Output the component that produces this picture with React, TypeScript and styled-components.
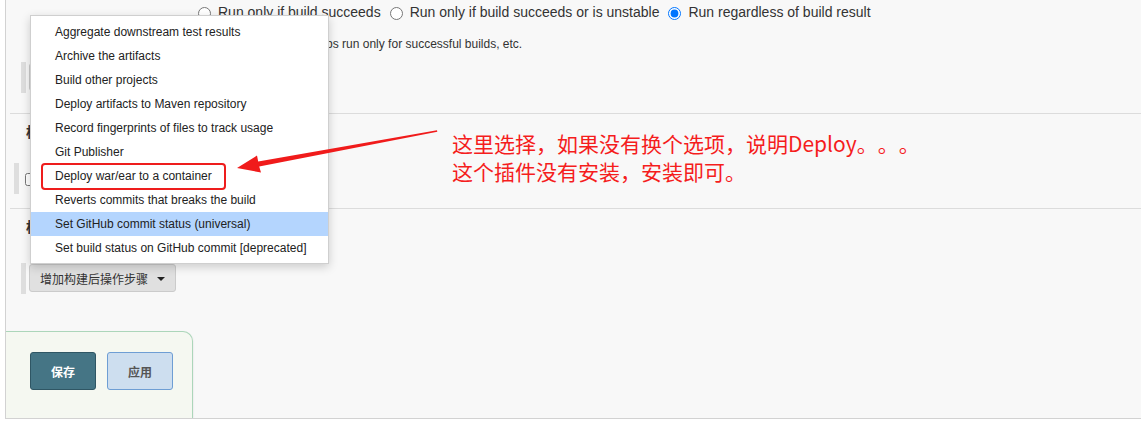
import React from "react";
import styled, { createGlobalStyle } from "styled-components";

const GlobalStyle = createGlobalStyle`
  html, body {
    margin: 0;
    padding: 0;
    background: #fff;
  }
  body {
    font-family: "Liberation Sans", Arial, "Noto Sans CJK SC", sans-serif;
    color: #333;
  }
`;

const menuItems = [
  "Aggregate downstream test results",
  "Archive the artifacts",
  "Build other projects",
  "Deploy artifacts to Maven repository",
  "Record fingerprints of files to track usage",
  "Git Publisher",
  "Deploy war/ear to a container",
  "Reverts commits that breaks the build",
  "Set GitHub commit status (universal)",
  "Set build status on GitHub commit [deprecated]",
];

function App() {
  return (
    <>
      <GlobalStyle />
      <Frame>
        <RadioRow>
          <RadioLabel>
            <input type="radio" name="run" />
            Run only if build succeeds
          </RadioLabel>
          <RadioLabel>
            <input type="radio" name="run" />
            Run only if build succeeds or is unstable
          </RadioLabel>
          <RadioLabel>
            <input type="radio" name="run" defaultChecked />
            Run regardless of build result
          </RadioLabel>
        </RadioRow>
        <Description>Should the post-build steps run only for successful builds, etc.</Description>

        <ActionRow $top={10} $indent={15}>
          <GreyBar />
          <AddButton>
            增加构建后步骤 <Caret />
          </AddButton>
        </ActionRow>

        <Separator $top={20} />
        <Heading $top={8}>构建设置</Heading>
        <ActionRow $top={23} $indent={8}>
          <GreyBar />
          <CheckLabel>
            <input type="checkbox" />
            E-mail Notification
          </CheckLabel>
        </ActionRow>

        <Separator $top={14} />
        <Heading $top={8}>构建后操作</Heading>
        <ActionRow $top={28} $indent={15}>
          <GreyBar />
          <AddButton>
            增加构建后操作步骤 <Caret />
          </AddButton>
        </ActionRow>

        <BottomBar>
          <SaveButton $primary>保存</SaveButton>
          <SaveButton>应用</SaveButton>
        </BottomBar>

        <Menu>
          {menuItems.map((item, i) => (
            <MenuItem key={item} $active={i === 8}>
              {item}
            </MenuItem>
          ))}
        </Menu>

        <Highlight />
        <Arrow viewBox="230 120 220 60" width="220" height="60">
          <polygon
            points="237,168 257,155.5 258.2,161.6 437,130.2 437.3,131.8 259.2,166.6 261,172.5"
            fill="#f01b1b"
          />
        </Arrow>
        <Note>
          这里选择，如果没有换个选项，说明Deploy。。。
          <br />
          这个插件没有安装，安装即可。
        </Note>
      </Frame>
    </>
  );
}

export default App;

const Frame = styled.div`
  position: relative;
  display: flex;
  flex-direction: column;
  margin-left: 5px;
  height: 418px;
  background: #f8f8f8;
  border-left: 1px solid #d2d2d2;
  border-bottom: 1px solid #d2d2d2;
  overflow: hidden;
`;

const RadioRow = styled.div`
  display: flex;
  align-items: center;
  height: 24px;
  padding-left: 187px;
  font-size: 14px;
  white-space: nowrap;
  color: #333;
`;

const RadioLabel = styled.label`
  display: inline-flex;
  align-items: center;
  margin-right: 4px;

  input {
    width: 13px;
    height: 13px;
    margin: 3px 7px 0 5px;
  }
`;

const Description = styled.div`
  margin-top: 12px;
  padding-left: 188px;
  font-size: 12px;
  line-height: 16px;
  color: #333;
  white-space: nowrap;
`;

const ActionRow = styled.div<{ $top: number; $indent: number }>`
  display: flex;
  align-items: flex-start;
  flex-shrink: 0;
  margin-top: ${(p) => p.$top}px;
  padding-left: ${(p) => p.$indent}px;
  height: 31px;
`;

const GreyBar = styled.div`
  flex-shrink: 0;
  width: 5px;
  height: 31px;
  background: #dedede;
`;

const AddButton = styled.button`
  display: flex;
  align-items: center;
  gap: 9px;
  box-sizing: border-box;
  margin: 1px 0 0 3px;
  height: 28px;
  padding: 0 10px;
  border: 1px solid #cbcbcb;
  border-radius: 3px;
  background: #e0e0e0;
  font-family: "Noto Sans CJK SC", sans-serif;
  font-size: 12px;
  color: #333;
`;

const Caret = styled.span`
  width: 0;
  height: 0;
  margin-top: 1px;
  border-left: 4px solid transparent;
  border-right: 4px solid transparent;
  border-top: 4px solid #222;
`;

const CheckLabel = styled.label`
  display: flex;
  align-items: center;
  gap: 4px;
  margin: 8px 0 0 2px;
  font-size: 14px;

  input {
    margin: 0 0 0 4px;
    width: 13px;
    height: 13px;
  }
`;

const Separator = styled.div<{ $top: number }>`
  flex-shrink: 0;
  margin: ${(p) => p.$top}px 0 0 4px;
  height: 1px;
  background: #dcdcdc;
`;

const Heading = styled.div<{ $top: number }>`
  flex-shrink: 0;
  margin-top: ${(p) => p.$top}px;
  padding-left: 20px;
  height: 18px;
  font-family: "Noto Sans CJK SC", sans-serif;
  font-size: 14px;
  font-weight: 700;
  line-height: 18px;
  color: #333;
`;

const BottomBar = styled.div`
  display: flex;
  flex-shrink: 0;
  gap: 11px;
  margin-top: auto;
  width: 162px;
  height: 66px;
  padding: 20px 0 0 24px;
  background: #f5f8f1;
  border: 1px solid #acd6ba;
  border-left: none;
  border-bottom: none;
  border-top-right-radius: 10px;
  box-shadow: 0 1px 2px rgba(0, 0, 0, 0.12);
`;

const SaveButton = styled.button<{ $primary?: boolean }>`
  width: 66px;
  height: 38px;
  border-radius: 3px;
  border: 1px solid ${(p) => (p.$primary ? "#2f5664" : "#6e9ed4")};
  background: ${(p) => (p.$primary ? "#457585" : "#cddeef")};
  color: ${(p) => (p.$primary ? "#fff" : "#555")};
  font-family: "Noto Sans CJK SC", sans-serif;
  font-size: 12px;
  font-weight: 700;
`;

const Menu = styled.ul`
  position: absolute;
  left: 24px;
  top: 15px;
  width: 297px;
  margin: 0;
  padding: 4px 0 3px;
  list-style: none;
  background: #fff;
  border: 1px solid #cfcfcf;
  box-shadow: 0 3px 9px rgba(0, 0, 0, 0.18);
`;

const MenuItem = styled.li<{ $active?: boolean }>`
  height: 24px;
  padding-left: 24px;
  line-height: 24px;
  font-size: 12px;
  color: #222;
  white-space: nowrap;
  background: ${(p) => (p.$active ? "#b4d5fe" : "transparent")};
`;

const Highlight = styled.div`
  position: absolute;
  left: 35px;
  top: 163px;
  width: 181px;
  height: 23px;
  border: 2px solid #ee1d1d;
  border-radius: 4px;
`;

const Arrow = styled.svg`
  position: absolute;
  left: 224px;
  top: 120px;
`;

const Note = styled.div`
  position: absolute;
  left: 446px;
  top: 129px;
  font-family: "Noto Sans CJK SC", sans-serif;
  font-size: 21px;
  line-height: 28px;
  color: #f51d1d;
  white-space: nowrap;
  text-spacing-trim: space-all;
  font-feature-settings: "halt" 0, "chws" 0;
`;
